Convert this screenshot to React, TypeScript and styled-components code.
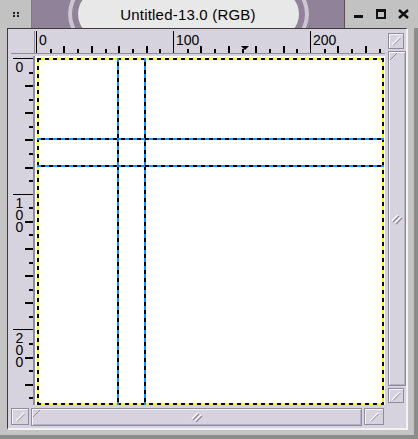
import React from "react";
import styled, { createGlobalStyle } from "styled-components";

// ruler scale (px per image unit) and origins inside their rulers
const H_SCALE = 1.37;
const V_SCALE = 1.357;
const H_ORIGIN = 1;
const V_ORIGIN = 2;
const IMAGE_PX = 347;
const GUIDES = [60, 80];

const LAVENDER = "#d6d3de";
const EDGE = "#8e8c9e";

const GlobalStyle = createGlobalStyle`
  html, body {
    margin: 0;
    padding: 0;
    background: #c4c4c4;
  }
  body {
    font-family: "Liberation Sans", Arial, sans-serif;
  }
`;

const Window = styled.div`
  width: 418px;
  height: 439px;
  display: flex;
  flex-direction: column;
  background: #c4c4c4;
  overflow: hidden;
`;

const TitleBar = styled.div`
  height: 28px;
  display: flex;
  flex-shrink: 0;
`;

const MenuButton = styled.div`
  width: 31px;
  border-right: 1px solid #7c7c7c;
  background: #c2c2c2;
  display: grid;
  grid-template-columns: 2px 2px;
  grid-template-rows: 2px 2px;
  gap: 1px 2px;
  place-content: center;
`;

const Dot = styled.span`
  background: #1c1c1c;
`;

const TitleStrip = styled.div`
  flex: 1;
  background: #8f8299;
  display: flex;
  align-items: center;
  justify-content: center;
  overflow: hidden;
`;

const TitlePill = styled.div`
  width: 221px;
  height: 48px;
  flex-shrink: 0;
  border-radius: 24px;
  background: #e8e8e8;
  box-shadow: 0 0 0 6px #8f8299, 0 0 0 10px #cdc6d1;
  display: flex;
  align-items: center;
  justify-content: center;
  font-size: 15px;
  letter-spacing: 0.2px;
  color: #000;
`;

const WindowButtons = styled.div`
  width: 74px;
  border-left: 1px solid #5e5048;
  background: #c2c2c2;
  display: flex;
  align-items: center;
  padding-left: 9px;
  gap: 12px;
  box-sizing: border-box;
`;

const Body = styled.div`
  flex: 1;
  display: flex;
  padding: 0 10px 9px 7px;
  box-shadow: inset -4px -4px 0 #8c8c8c;
`;

const Frame = styled.div`
  flex: 1;
  background: ${LAVENDER};
  border-top: 1px solid #3c3c3c;
  border-left: 1px solid #3c3c3c;
  border-right: 2px solid #f2f2f2;
  border-bottom: 2px solid #f2f2f2;
  padding: 2px 0 0 3px;
  display: grid;
  grid-template-columns: 24px 350px 1fr;
  grid-template-rows: 25px 349px 1fr;
`;

const Corner = styled.div`
  grid-area: 1 / 1;
  height: 23px;
  border-right: 1px solid ${EDGE};
  border-bottom: 1px solid ${EDGE};
  box-sizing: border-box;
`;

const HRuler = styled.div`
  grid-area: 1 / 2;
  height: 23px;
  position: relative;
  overflow: hidden;
  border-bottom: 1px solid ${EDGE};
  box-sizing: border-box;
`;

const VRuler = styled.div`
  grid-area: 2 / 1;
  position: relative;
  overflow: hidden;
  border-right: 2px solid ${EDGE};
`;

const HTick = styled.span<{ $size: number }>`
  position: absolute;
  bottom: 0;
  width: ${(p) => (p.$size > 20 ? 1 : 2)}px;
  height: ${(p) => p.$size}px;
  background: #000;
`;

const VTick = styled.span<{ $size: number }>`
  position: absolute;
  right: 0;
  height: ${(p) => (p.$size > 16 ? 1 : 2)}px;
  width: ${(p) => p.$size}px;
  background: #000;
`;

const HLabel = styled.span`
  position: absolute;
  top: 1px;
  font-size: 14px;
  line-height: 16px;
`;

const VLabel = styled.span`
  position: absolute;
  left: 4px;
  width: 9px;
  font-size: 14px;
  line-height: 12px;
  display: flex;
  flex-direction: column;
  align-items: center;
`;

const Digit = styled.span`
  height: 12px;
  overflow: visible;
`;

const Marker = styled.span`
  position: absolute;
  bottom: 3px;
  width: 0;
  height: 0;
  border-left: 4px solid transparent;
  border-right: 4px solid transparent;
  border-top: 4px solid #000;
`;

const Canvas = styled.div`
  grid-area: 2 / 2;
  background: #fff;
  position: relative;
`;

const ImageArea = styled.div`
  position: absolute;
  left: 2px;
  top: 2px;
  width: ${IMAGE_PX}px;
  height: ${IMAGE_PX}px;
  background:
    repeating-linear-gradient(90deg, #000 0 4px, #ffff00 4px 8px) top / 100% 2px no-repeat,
    repeating-linear-gradient(90deg, #000 0 4px, #ffff00 4px 8px) bottom / 100% 2px no-repeat,
    repeating-linear-gradient(180deg, #000 0 4px, #ffff00 4px 8px) left / 2px 100% no-repeat,
    repeating-linear-gradient(180deg, #000 0 4px, #ffff00 4px 8px) right / 2px 100% no-repeat,
    #fff;
`;

const Guide = styled.span<{ $vertical?: boolean }>`
  position: absolute;
  ${(p) =>
    p.$vertical
      ? `top: 0; bottom: 0; width: 2px;
         background: repeating-linear-gradient(180deg, #1a8cff 0 4px, #000 4px 8px);`
      : `left: 0; right: 0; height: 2px;
         background: repeating-linear-gradient(90deg, #1a8cff 0 4px, #000 4px 8px);`}
`;

const RightColumn = styled.div`
  grid-column: 3;
  grid-row: 1 / 3;
  display: flex;
  flex-direction: column;
  padding: 2px 0 2px 3px;
  gap: 2px;
`;

const SmallButton = styled.div<{ $w?: number; $h?: number }>`
  width: ${(p) => p.$w ?? 16}px;
  height: ${(p) => p.$h ?? 16}px;
  flex-shrink: 0;
  box-sizing: border-box;
  border: 1px solid ${EDGE};
  box-shadow: inset 1px 1px 0 #f6f6fa;
  display: flex;
  align-items: center;
  justify-content: center;
`;

const Scroll = styled.div<{ $vertical?: boolean }>`
  flex: 1;
  display: flex;
  flex-direction: ${(p) => (p.$vertical ? "column" : "row")};
  gap: 2px;
`;

const Slider = styled.div`
  flex: 1;
  box-sizing: border-box;
  border: 1px solid ${EDGE};
  box-shadow: inset 1px 1px 0 #f6f6fa, inset -1px -1px 0 #b4b2c2;
  display: flex;
  align-items: center;
  justify-content: center;
  background: linear-gradient(135deg, ${LAVENDER} 0 6px, ${EDGE} 6px 7px, transparent 7px) no-repeat
    ${LAVENDER};
`;

const BottomRow = styled.div`
  grid-column: 1 / 3;
  grid-row: 3;
  display: flex;
  gap: 2px;
  padding: 3px 1px 2px 0;
`;

const Diagonal = ({ size = 10 }: { size?: number }) => (
  <svg width={size} height={size} viewBox="0 0 10 10">
    <path d="M1 9 L9 1" stroke="#ffffff" strokeWidth="1.2" />
    <path d="M2 9.5 L9.5 2" stroke="#8a889a" strokeWidth="1" />
  </svg>
);

const Grip = () => (
  <svg width="12" height="12" viewBox="0 0 12 12">
    <path d="M1 8 L7 2" stroke="#ffffff" strokeWidth="1.4" />
    <path d="M2 9 L8 3" stroke="#8a889a" strokeWidth="1.2" />
    <path d="M4 10 L10 4" stroke="#ffffff" strokeWidth="1.4" />
    <path d="M5 11 L11 5" stroke="#8a889a" strokeWidth="1.2" />
  </svg>
);

const ticks = Array.from({ length: 26 }, (_, i) => i * 10);

const hTickSize = (u: number) => (u % 100 === 0 ? 22 : u % 20 === 0 ? 7 : 4);
const vTickSize = (u: number) => (u % 100 === 0 ? 20 : u % 20 === 0 ? 8 : 4);

export default function App() {
  return (
    <>
      <GlobalStyle />
      <Window>
        <TitleBar>
          <MenuButton>
            <Dot />
            <Dot />
            <Dot />
            <Dot />
          </MenuButton>
          <TitleStrip>
            <TitlePill>Untitled-13.0 (RGB)</TitlePill>
          </TitleStrip>
          <WindowButtons>
            <svg width="10" height="10" viewBox="0 0 10 10">
              <rect x="0" y="6" width="9" height="3" fill="#111" />
            </svg>
            <svg width="10" height="10" viewBox="0 0 10 10">
              <rect x="1" y="1" width="8" height="8" fill="none" stroke="#111" strokeWidth="2" />
              <rect x="0" y="0" width="10" height="3" fill="#111" />
            </svg>
            <svg width="11" height="10" viewBox="0 0 11 10">
              <path d="M1 1 L10 9 M10 1 L1 9" stroke="#111" strokeWidth="2.4" />
            </svg>
          </WindowButtons>
        </TitleBar>
        <Body>
          <Frame>
            <Corner />
            <HRuler>
              {ticks.map((u) => (
                <HTick key={u} $size={hTickSize(u)} style={{ left: H_ORIGIN + u * H_SCALE }} />
              ))}
              {[0, 100, 200].map((u) => (
                <HLabel key={u} style={{ left: H_ORIGIN + u * H_SCALE + 3 }}>
                  {u}
                </HLabel>
              ))}
              <Marker style={{ left: 206 }} />
            </HRuler>
            <RightColumn>
              <SmallButton>
                <Diagonal />
              </SmallButton>
              <Scroll $vertical>
                <Slider>
                  <Grip />
                </Slider>
                <SmallButton $h={15}>
                  <Diagonal />
                </SmallButton>
              </Scroll>
            </RightColumn>
            <VRuler>
              {ticks.map((u) => (
                <VTick key={u} $size={vTickSize(u)} style={{ top: V_ORIGIN + u * V_SCALE }} />
              ))}
              {[0, 100, 200].map((u) => (
                <VLabel key={u} style={{ top: V_ORIGIN + u * V_SCALE + 3 }}>
                  {String(u)
                    .split("")
                    .map((d, i) => (
                      <Digit key={i}>{d}</Digit>
                    ))}
                </VLabel>
              ))}
            </VRuler>
            <Canvas>
              <ImageArea>
                {GUIDES.map((g) => (
                  <Guide key={"v" + g} $vertical style={{ left: Math.round(g * 1.355) - 1 }} />
                ))}
                {GUIDES.map((g) => (
                  <Guide key={"h" + g} style={{ top: Math.round(g * 1.355) - 1 }} />
                ))}
              </ImageArea>
            </Canvas>
            <BottomRow>
              <SmallButton $w={18} $h={17}>
                <Diagonal />
              </SmallButton>
              <Scroll>
                <Slider>
                  <Grip />
                </Slider>
                <SmallButton $w={20} $h={17}>
                  <Diagonal />
                </SmallButton>
              </Scroll>
            </BottomRow>
          </Frame>
        </Body>
      </Window>
    </>
  );
}
